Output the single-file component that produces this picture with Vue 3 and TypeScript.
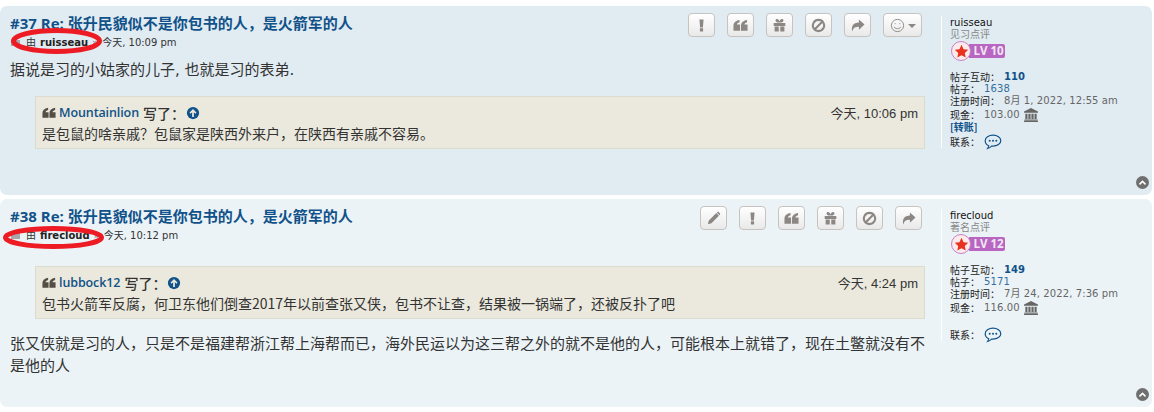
<template>
  <div class="page">
    <article v-for="post in posts" :key="post.id" :class="['post', post.bg]">
      <div class="post-main">
        <div class="post-head">
          <div class="head-text">
            <h3 class="title">#{{ post.id }} Re: 张升民貌似不是你包书的人，是火箭军的人</h3>
            <p class="meta">
              <span class="mini"></span>
              <span class="by">由</span>
              <strong>{{ post.user }}</strong>
              <span class="raquo">»</span>
              <span>{{ post.time }}</span>
            </p>
          </div>
          <ul class="buttons">
            <li v-for="btn in post.buttons" :key="btn" :class="['btn', { wide: btn === 'smile' }]">
              <svg viewBox="0 0 16 16" class="ico">
                <path :d="icons[btn]" :fill="btn === 'smile' || btn === 'ban' ? 'none' : 'currentColor'" :stroke="btn === 'smile' || btn === 'ban' ? 'currentColor' : 'none'" :stroke-width="btn === 'ban' ? 2.2 : 1" />
              </svg>
              <span v-if="btn === 'smile'" class="caret"></span>
            </li>
          </ul>
        </div>

        <p v-if="post.before" class="text first">{{ post.before }}</p>

        <blockquote class="quote">
          <div class="quote-head">
            <svg viewBox="0 0 16 16" class="quote-ico"><path :d="icons.quote" fill="currentColor" /></svg>
            <a class="quote-user">{{ post.quoteUser }}</a>
            <span class="wrote">写了：</span>
            <svg viewBox="0 0 16 16" class="up-ico">
              <circle cx="8" cy="8" r="7" fill="currentColor" />
              <path d="M8 3.500l4 4-1.300 1.300L9 7.200V12.500H7V7.200L5.300 8.800 4 7.500z" fill="#ebe9dd" />
            </svg>
            <span class="quote-time">{{ post.quoteTime }}</span>
          </div>
          <p class="quote-body">{{ post.quote }}</p>
        </blockquote>

        <p v-if="post.after" class="text after">{{ post.after }}</p>
      </div>

      <aside class="profile">
        <div class="name">{{ post.user }}</div>
        <div class="rank">{{ post.rank }}</div>
        <div class="badge">
          <span class="medal">
            <svg viewBox="0 0 16 16"><path d="M8 .800l2.200 4.700 5 .6-3.700 3.400 1 5L8 12 3.500 14.500l1-5L.800 6.100l5-.6z" fill="#e8321f" /></svg>
          </span>
          <span class="lv">LV {{ post.level }}</span>
        </div>
        <dl class="stats">
          <div class="row"><dt>帖子互动：</dt><dd class="strong">{{ post.interact }}</dd></div>
          <div class="row"><dt>帖子：</dt><dd class="link">{{ post.count }}</dd></div>
          <div class="row"><dt>注册时间：</dt><dd>{{ post.joined }}</dd></div>
          <div class="row cash">
            <dt>现金：</dt><dd>{{ post.cash }}</dd>
            <svg viewBox="0 0 16 16" class="bank"><path d="M8 0l8 4v1.500H0V4zM1.500 6.500h2.500v6H1.500zM5 6.500h2.500v6H5zM8.500 6.500H11v6H8.500zM12 6.500h2.500v6H12zM.500 13h15v1.300H.500zM0 14.700h16V16H0z" fill="currentColor" /></svg>
          </div>
          <div class="row transfer"><a v-if="post.transfer">[转账]</a></div>
          <div class="row contact">
            <dt>联系：</dt>
            <svg viewBox="0 0 18 16" class="chat">
              <path d="M9 1.200c4.200 0 7.800 2.400 7.800 5.500S13.200 12.200 9 12.200H7.600c-1 1-2.200 1.900-4 2.300.6-.8 1-1.700 1.100-2.800C2.700 10.800 1.200 9 1.200 6.700 1.200 3.600 4.800 1.200 9 1.200z" fill="none" stroke="currentColor" stroke-width="1.200" />
              <circle cx="5.700" cy="6.700" r="1" fill="currentColor" />
              <circle cx="9" cy="6.700" r="1" fill="currentColor" />
              <circle cx="12.300" cy="6.700" r="1" fill="currentColor" />
            </svg>
          </div>
        </dl>
      </aside>

      <svg viewBox="0 0 16 16" class="top-ico">
        <circle cx="8" cy="8" r="8" fill="#6f6f6f" />
        <path d="M3.600 9.600L8 5.200l4.400 4.400-1.400 1.400-3-3-3 3z" fill="#ffffff" />
      </svg>
      <svg class="circle" :style="{ left: post.ring.x + 'px', top: post.ring.y + 'px' }" :width="post.ring.w" :height="post.ring.h">
        <ellipse :cx="post.ring.w / 2" :cy="post.ring.h / 2" :rx="post.ring.w / 2 - 2.500" :ry="post.ring.h / 2 - 2.500" fill="none" stroke="#ed1c24" stroke-width="5" />
      </svg>
    </article>
  </div>
</template>

<script setup lang="ts">
type Post = {
  id: number;
  bg: string;
  user: string;
  time: string;
  buttons: string[];
  before?: string;
  after?: string;
  quoteUser: string;
  quoteTime: string;
  quote: string;
  rank: string;
  level: number;
  interact: number;
  count: number;
  joined: string;
  cash: string;
  transfer: boolean;
  ring: { x: number; y: number; w: number; h: number };
};

const icons: Record<string, string> = {
  alert: 'M5.800 1.500h4.400l-.7 8.500H6.500zM6.300 11h3.400v3.500H6.300z',
  quote: 'M.500 8.500C.500 5 2.500 2.800 7 2v2.500C5 5 4.200 6 4.100 7H7.500v6.500H.500zM8.500 8.500C8.500 5 10.500 2.800 15 2v2.500C13 5 12.200 6 12.100 7H15.500v6.500H8.500z',
  gift: 'M1.800 5.200h12.400V8.400H1.800zM2.800 9h4.400v5.500H2.800zM8.800 9h4.400v5.500H8.800zM3.800 2.200C4.200.6 6.400.6 7.200 2L8 3.400 8.800 2c.8-1.400 3-1.400 3.400.2.300 1.200-.6 2.300-1.800 2.500H5.600C4.400 4.500 3.500 3.400 3.800 2.200z',
  ban: 'M8 2a6 6 0 1 0 .01 0zM3.800 12.200L12.200 3.800',
  share: 'M9.500 1.500L15.500 7 9.500 12.500V9.300C6 9.300 3.500 10 2.500 14.500 1 9 3.500 4.800 9.500 4.800z',
  smile: 'M8 1.500a6.500 6.500 0 1 0 .01 0zM5 6h1M10 6h1M4.500 9.500c1 2.500 6 2.500 7 0',
  pencil: 'M11 2.200l2.800 2.800-8 8L2 14l1-3.800zM12 1.200c.5-.5 1.200-.5 1.700 0l1.100 1.100c.5.5.5 1.200 0 1.700l-.5.500-2.800-2.800z',
};

const posts: Post[] = [
  {
    id: 37,
    bg: 'bg2',
    user: 'ruisseau',
    time: '今天, 10:09 pm',
    buttons: ['alert', 'quote', 'gift', 'ban', 'share', 'smile'],
    before: '据说是习的小姑家的儿子, 也就是习的表弟.',
    quoteUser: 'Mountainlion',
    quoteTime: '今天, 10:06 pm',
    quote: '是包鼠的啥亲戚？包鼠家是陕西外来户，在陕西有亲戚不容易。',
    rank: '见习点评',
    level: 10,
    interact: 110,
    count: 1638,
    joined: '8月 1, 2022, 12:55 am',
    cash: '103.00',
    transfer: true,
    ring: { x: 11, y: 22, w: 91, h: 26 },
  },
  {
    id: 38,
    bg: 'bg1',
    user: 'firecloud',
    time: '今天, 10:12 pm',
    buttons: ['pencil', 'alert', 'quote', 'gift', 'ban', 'share'],
    quoteUser: 'lubbock12',
    quoteTime: '今天, 4:24 pm',
    quote: '包书火箭军反腐，何卫东他们倒查2017年以前查张又侠，包书不让查，结果被一锅端了，还被反扑了吧',
    after: '张又侠就是习的人，只是不是福建帮浙江帮上海帮而已，海外民运以为这三帮之外的就不是他的人，可能根本上就错了，现在土鳖就没有不是他的人',
    rank: '著名点评',
    level: 12,
    interact: 149,
    count: 5171,
    joined: '7月 24, 2022, 7:36 pm',
    cash: '116.00',
    transfer: false,
    ring: { x: 3, y: 27, w: 101, h: 23 },
  },
];
</script>

<style>
html,
body {
  margin: 0;
  background: #ffffff;
}
</style>

<style scoped>
.page {
  width: 1152px;
  height: 412px;
  padding-top: 6px;
  box-sizing: border-box;
  display: flex;
  flex-direction: column;
  gap: 4px;
  font-family: "DejaVu Sans", "Noto Sans CJK SC", sans-serif;
  color: #333333;
}

.post {
  position: relative;
  display: flex;
  border-radius: 7px;
  overflow: hidden;
}

.bg2 {
  height: 189px;
  background: #e1ebf2;
}

.bg1 {
  height: 208px;
  background: #ecf3f7;
}

.post-main {
  width: 925px;
  padding: 7px 0 0 10px;
  box-sizing: border-box;
}

.post-head {
  display: flex;
  justify-content: space-between;
  align-items: flex-start;
}

.title {
  margin: 0;
  font-family: "Open Sans", "Noto Sans CJK SC", sans-serif;
  font-size: 15px;
  line-height: 20px;
  font-weight: 700;
  color: #105289;
}

.meta {
  margin: 2px 0 0;
  display: flex;
  align-items: center;
  gap: 4px;
  font-size: 10px;
  line-height: 16px;
}

.mini {
  width: 9px;
  height: 6px;
  margin: 0 2px 0 1px;
  background: #a8a8a8;
}

.meta strong {
  color: #222222;
}

.raquo {
  color: #777777;
}

.buttons {
  display: flex;
  gap: 12px;
  margin: 0 3px 0 0;
  padding: 0;
  list-style: none;
}

.btn {
  width: 27px;
  height: 24px;
  box-sizing: border-box;
  display: flex;
  align-items: center;
  justify-content: center;
  gap: 3px;
  border: 1px solid #c7c3bf;
  border-radius: 4px;
  background: linear-gradient(#ffffff, #e9e9e9);
  color: #8c8783;
}

.btn.wide {
  width: 39px;
}

.ico {
  width: 15px;
  height: 15px;
}

.caret {
  width: 0;
  height: 0;
  margin-top: 2px;
  border-left: 4px solid transparent;
  border-right: 4px solid transparent;
  border-top: 4px solid #8c8783;
}

.text {
  margin: 0;
  font-family: "DejaVu Sans", "Noto Sans CJK SC", sans-serif;
  font-size: 15px;
  line-height: 22px;
}

.text.first {
  margin-top: 8px;
}

.text.after {
  margin-top: 14px;
  width: 916px;
}

.quote {
  width: 890px;
  box-sizing: border-box;
  margin: 15px 0 0 25px;
  padding: 6px 6px 5px;
  background: #ebe9dd;
  border: 1px solid #dbdbce;
  font-family: "Noto Sans CJK SC", sans-serif;
  font-size: 14px;
}

.bg1 .quote {
  margin-top: 22px;
}

.quote-head {
  display: flex;
  align-items: center;
  height: 19px;
}

.quote-ico {
  width: 14px;
  height: 14px;
  margin-right: 3px;
  color: #554e45;
}

.quote-user {
  font-family: "Open Sans", "Noto Sans CJK SC", sans-serif;
  font-size: 12.500px;
  font-weight: 600;
  letter-spacing: -0.1px;
  color: #105289;
  margin-right: 4px;
}

.wrote {
  font-weight: 500;
}

.up-ico {
  width: 14px;
  height: 14px;
  margin-left: 1px;
  color: #105289;
}

.quote-time {
  margin-left: auto;
  font-family: "Liberation Sans", "Noto Sans CJK SC", sans-serif;
  font-size: 13px;
}

.quote-body {
  margin: 2px 0 0;
  line-height: 19px;
  color: #333333;
}

.profile {
  width: 211px;
  height: 132px;
  margin: 10px 0 0 16px;
  padding-left: 8px;
  box-sizing: border-box;
  border-left: 1px solid #ffffff;
  font-size: 10px;
  line-height: 12px;
}

.name {
  color: #111111;
  margin-top: 1px;
}

.rank {
  color: #888888;
}

.badge {
  display: flex;
  align-items: center;
  height: 20px;
  margin-left: 1px;
}

.medal {
  width: 20px;
  height: 20px;
  box-sizing: border-box;
  border: 1px solid #c87fc6;
  border-radius: 50%;
  background: #fdeaea;
  display: flex;
  align-items: center;
  justify-content: center;
  position: relative;
  z-index: 1;
}

.medal svg {
  width: 15px;
  height: 15px;
}

.lv {
  margin-left: -2px;
  width: 36px;
  height: 14px;
  padding-left: 3px;
  box-sizing: border-box;
  border-radius: 0 2px 2px 0;
  background: #b866c2;
  color: #f3e6f5;
  font-family: "Open Sans", sans-serif;
  font-size: 11.500px;
  font-weight: 700;
  line-height: 14px;
  text-align: center;
  white-space: nowrap;
}

.stats {
  margin: 10px 0 0;
}

.row {
  display: flex;
  align-items: center;
  height: 12px;
  white-space: nowrap;
}

dt {
  color: #222222;
  font-family: "Noto Sans CJK SC", sans-serif;
  font-size: 10px;
}

dd {
  margin: 0 0 0 4px;
  color: #666666;
  letter-spacing: 0.1px;
}

dd.strong {
  color: #105289;
  font-weight: 700;
}

dd.link {
  color: #336f9e;
}

.cash {
  height: 14px;
  margin-top: 1px;
}

.bank {
  width: 16px;
  height: 14px;
  margin-left: 3px;
  color: #666666;
}

.transfer {
  height: 12px;
  margin-top: -1px;
}

.transfer a {
  color: #105289;
  font-family: "Noto Sans CJK SC", sans-serif;
  font-weight: 700;
}

.contact {
  height: 16px;
  margin-top: 1px;
}

.chat {
  width: 18px;
  height: 16px;
  margin-left: 4px;
  color: #105289;
}

.top-ico {
  position: absolute;
  right: 3px;
  bottom: 6px;
  width: 13px;
  height: 13px;
}

.circle {
  position: absolute;
}
</style>
